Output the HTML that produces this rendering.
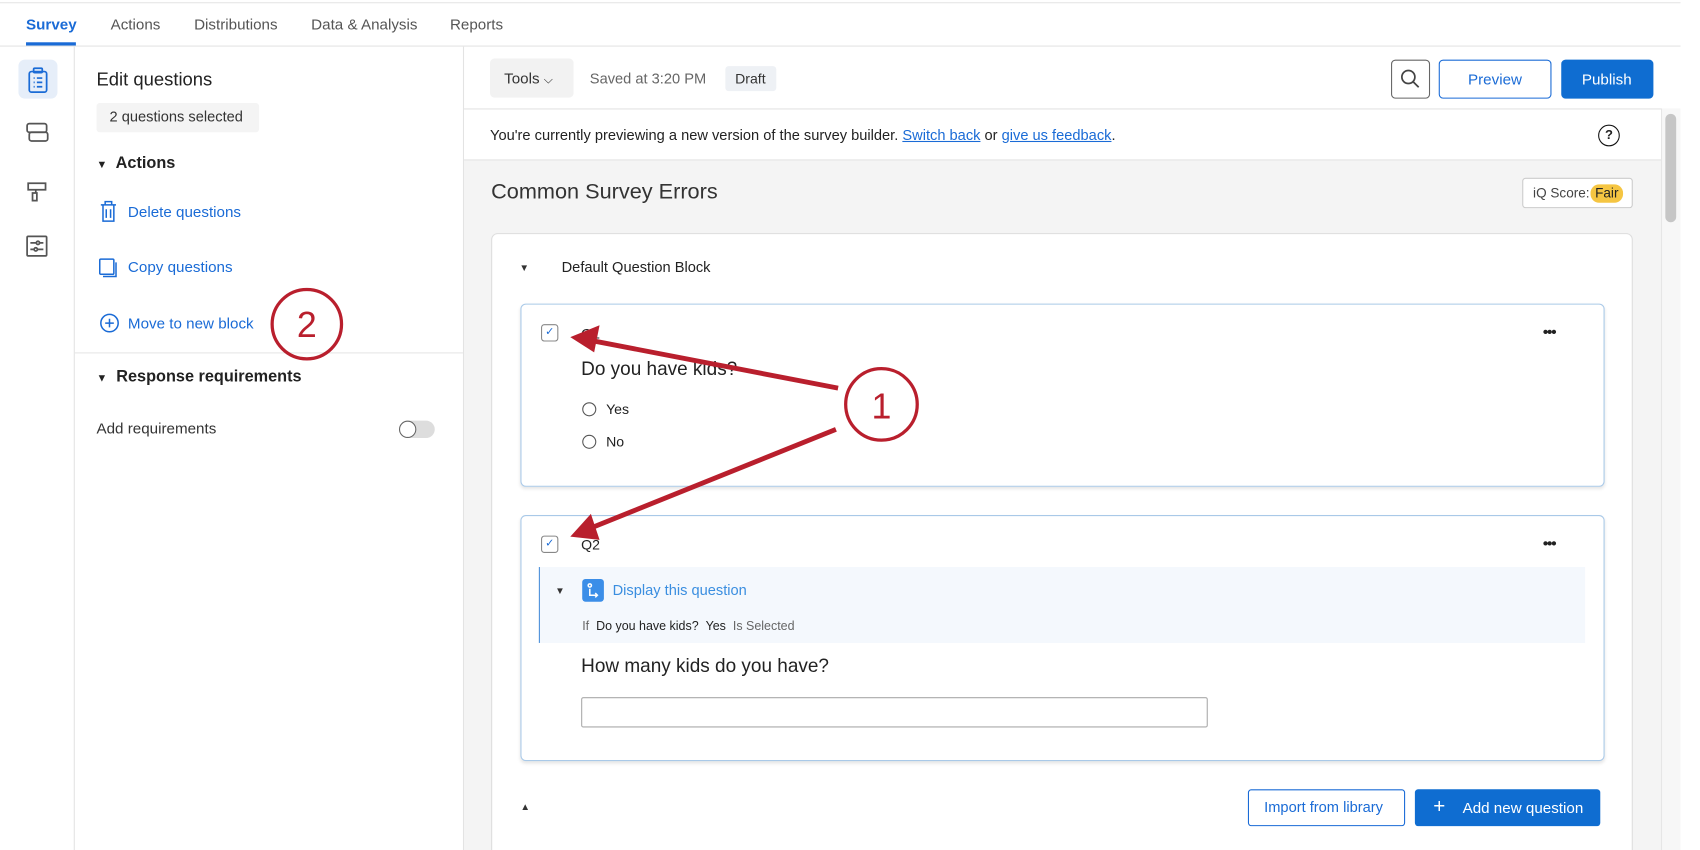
<!DOCTYPE html>
<html><head><meta charset="utf-8"><style>
*{box-sizing:border-box;margin:0;padding:0}
html,body{width:1700px;height:850px;overflow:hidden;background:#fff;font-family:"Liberation Sans",sans-serif;color:#222}
#w{position:absolute;left:0;top:0;width:1550px;height:784px;transform:scale(1.0842);transform-origin:0 0;overflow:hidden;background:#fff}
.a{position:absolute}
.t{position:absolute;white-space:nowrap;line-height:1}
.blue{color:#1a6bd6}
</style></head><body><div id="w">
<div class="a" style="left:0;top:2px;width:1550px;height:1px;background:#e6e6e6"></div>
<div class="a" style="left:0;top:42px;width:1550px;height:1px;background:#e3e3e3"></div>
<div class="t" style="left:24px;top:15px;font-size:14px;font-weight:bold;color:#1a6bd6">Survey</div>
<div class="a" style="left:24px;top:39px;width:46px;height:3px;background:#1a6bd6"></div>
<div class="t" style="left:102px;top:15px;font-size:14px;color:#555">Actions</div>
<div class="t" style="left:179px;top:15px;font-size:14px;color:#555">Distributions</div>
<div class="t" style="left:287px;top:15px;font-size:14px;color:#555">Data &amp; Analysis</div>
<div class="t" style="left:415px;top:15px;font-size:14px;color:#555">Reports</div>
<!-- rail -->
<div class="a" style="left:68px;top:43px;width:1px;height:741px;background:#e3e3e3"></div>
<div class="a" style="left:17px;top:55px;width:36px;height:36px;border-radius:6px;background:#e6eef9"></div>
<svg class="a" style="left:0;top:43px" width="68" height="200" fill="none" stroke-width="1.6">
<g stroke="#1a6bd6"><rect x="27" y="23" width="16" height="19" rx="2"/><rect x="31" y="20" width="8" height="4" rx="1"/><path d="M31 29h1M34 29h5M31 33h1M34 33h5M31 37h1M34 37h5"/></g>
<g stroke="#555"><rect x="25" y="71" width="18" height="8" rx="2"/><rect x="27" y="79" width="17" height="8" rx="2"/><path d="M26 126h16v6H26zM33 132v3h-0M30 135v7h4v-7z"/><rect x="25" y="175" width="18" height="18" rx="1"/><path d="M28 181h5M37 181h3M28 187h3M35 187h5"/><circle cx="35" cy="181" r="1.5"/><circle cx="33" cy="187" r="1.5"/></g>
</svg>
<!-- left panel -->
<div class="a" style="left:427px;top:43px;width:1px;height:741px;background:#e3e3e3"></div>
<div class="t" style="left:89px;top:65px;font-size:17px;color:#222">Edit questions</div>
<div class="a" style="left:89px;top:95px;width:150px;height:27px;background:#f4f4f4;border-radius:3px"></div>
<div class="t" style="left:101px;top:101px;font-size:13.5px;color:#333">2 questions selected</div>
<div class="t" style="left:89px;top:143px;font-size:15px;font-weight:bold"><span style="font-size:10px">▼</span>&nbsp; Actions</div>
<svg class="a" style="left:90px;top:184px" width="24" height="130" fill="none" stroke="#1a6bd6" stroke-width="1.4"><path d="M3 5h14M7 5V2h6v3M5 5v15h10V5M8 9v8M12 9v8"/><rect x="2" y="55" width="13" height="14" rx="1"/><path d="M5 71h12V58"/><circle cx="11" cy="114" r="8"/><path d="M11 110v8M7 114h8"/></svg>
<div class="t blue" style="left:118px;top:188px;font-size:14px">Delete questions</div>
<div class="t blue" style="left:118px;top:239px;font-size:14px">Copy questions</div>
<div class="t blue" style="left:118px;top:291px;font-size:14px">Move to new block</div>
<div class="a" style="left:69px;top:325px;width:358px;height:1px;background:#e6e6e6"></div>
<div class="t" style="left:89px;top:340px;font-size:15px;font-weight:bold"><span style="font-size:10px">▼</span>&nbsp; Response requirements</div>
<div class="t" style="left:89px;top:388px;font-size:14px;color:#333">Add requirements</div>
<div class="a" style="left:368px;top:388px;width:33px;height:16px;border-radius:8px;background:#ddd"></div>
<div class="a" style="left:368px;top:388px;width:16px;height:16px;border-radius:8px;background:#fff;border:1.5px solid #666"></div>
<!-- main -->
<div class="a" style="left:428px;top:100px;width:1104px;height:684px;background:#f4f4f4"></div>
<div class="a" style="left:428px;top:100px;width:1104px;height:1px;background:#e3e3e3"></div>
<div class="a" style="left:428px;top:101px;width:1104px;height:47px;background:#fff;border-bottom:1px solid #e3e3e3"></div>
<div class="a" style="left:452px;top:54px;width:77px;height:36px;background:#f2f2f2;border-radius:4px"></div>
<div class="t" style="left:465px;top:65px;font-size:14px;color:#333">Tools <span style="font-size:11px">⌵</span></div>
<div class="t" style="left:544px;top:66px;font-size:13.5px;color:#666">Saved at 3:20 PM</div>
<div class="a" style="left:669px;top:61px;width:47px;height:23px;background:#eef1f5;border-radius:3px"></div>
<div class="t" style="left:678px;top:66px;font-size:13px;color:#333">Draft</div>
<div class="a" style="left:1283px;top:55px;width:36px;height:36px;border:1.5px solid #666;border-radius:4px"></div>
<svg class="a" style="left:1290px;top:62px" width="22" height="22" fill="none" stroke="#444" stroke-width="1.6"><circle cx="9" cy="9" r="6"/><path d="M13.5 13.5l5 5"/></svg>
<div class="a" style="left:1327px;top:55px;width:104px;height:36px;border:1.5px solid #1a6bd6;border-radius:4px"></div>
<div class="t blue" style="left:1354px;top:66px;font-size:14px">Preview</div>
<div class="a" style="left:1440px;top:55px;width:85px;height:36px;background:#0f6dd1;border-radius:4px"></div>
<div class="t" style="left:1459px;top:66px;font-size:14px;color:#fff">Publish</div>
<div class="t" style="left:452px;top:118px;font-size:13.5px;color:#222">You're currently previewing a new version of the survey builder. <span class="blue" style="text-decoration:underline">Switch back</span> or <span class="blue" style="text-decoration:underline">give us feedback</span>.</div>
<div class="a" style="left:1474px;top:115px;width:20px;height:20px;border:1.6px solid #111;border-radius:50%;font-size:12px;font-weight:bold;text-align:center;line-height:17px">?</div>
<div class="a" style="left:1532px;top:100px;width:18px;height:684px;background:#f7f7f7;border-left:1px solid #e6e6e6"></div>
<div class="a" style="left:1536px;top:105px;width:10px;height:100px;background:#c6c6c6;border-radius:5px"></div>
<div class="t" style="left:453px;top:167px;font-size:20px;color:#333">Common Survey Errors</div>
<div class="a" style="left:1404px;top:164px;width:102px;height:28px;background:#fff;border:1px solid #ccc;border-radius:3px"></div>
<div class="t" style="left:1414px;top:172px;font-size:12.5px;color:#444">iQ Score:</div>
<div class="a" style="left:1467px;top:170px;width:30px;height:17px;background:#f5c542;border-radius:8px;font-size:12.5px;text-align:center;line-height:17px">Fair</div>
<div class="a" style="left:453px;top:215px;width:1053px;height:580px;background:#fff;border:1px solid #ddd;border-radius:6px"></div>
<div class="t" style="left:479px;top:243px;font-size:9px;color:#333">▼</div>
<div class="t" style="left:518px;top:240px;font-size:13.5px;color:#222">Default Question Block</div>
<!-- Q1 -->
<div class="a" style="left:480px;top:280px;width:1000px;height:169px;border:1px solid #a9c9e8;border-radius:5px;box-shadow:0 2px 3px rgba(0,0,0,.1)"></div>
<div class="a" style="left:499px;top:299px;width:16px;height:16px;border:1.3px solid #888;border-radius:3px;color:#1a6bd6;font-size:10px;text-align:center;line-height:14px">✓</div>
<div class="t" style="left:536px;top:301px;font-size:13px;color:#222">Q1</div>
<div class="t" style="left:1423px;top:299px;font-size:14px;font-weight:bold;letter-spacing:-1px">•••</div>
<div class="t" style="left:536px;top:332px;font-size:17.5px;color:#222">Do you have kids?</div>
<div class="a" style="left:537px;top:371px;width:13px;height:13px;border:1.3px solid #555;border-radius:50%"></div>
<div class="t" style="left:559px;top:371px;font-size:13px">Yes</div>
<div class="a" style="left:537px;top:401px;width:13px;height:13px;border:1.3px solid #555;border-radius:50%"></div>
<div class="t" style="left:559px;top:401px;font-size:13px">No</div>
<!-- Q2 -->
<div class="a" style="left:480px;top:475px;width:1000px;height:227px;border:1px solid #a9c9e8;border-radius:5px;box-shadow:0 2px 3px rgba(0,0,0,.1)"></div>
<div class="a" style="left:499px;top:494px;width:16px;height:16px;border:1.3px solid #888;border-radius:3px;color:#1a6bd6;font-size:10px;text-align:center;line-height:14px">✓</div>
<div class="t" style="left:536px;top:496px;font-size:13px;color:#222">Q2</div>
<div class="t" style="left:1423px;top:494px;font-size:14px;font-weight:bold;letter-spacing:-1px">•••</div>
<div class="a" style="left:497px;top:523px;width:965px;height:70px;background:#f4f8fd;border-left:1.5px solid #4a90d9"></div>
<div class="t" style="left:512px;top:541px;font-size:9px;color:#333">▼</div>
<div class="a" style="left:537px;top:534px;width:20px;height:21px;background:#3b8ee8;border-radius:3px"></div>
<svg class="a" style="left:537px;top:534px" width="20" height="21" fill="none" stroke="#fff" stroke-width="1.4"><circle cx="7" cy="6" r="1.5"/><path d="M7 9v6h7M12 13l2 2-2 2"/></svg>
<div class="t" style="left:565px;top:538px;font-size:13.5px;color:#3a8ee0">Display this question</div>
<div class="t" style="left:537px;top:573px;font-size:11.5px;color:#666">If &nbsp;<span style="color:#222">Do you have kids? &nbsp;Yes</span> &nbsp;Is Selected</div>
<div class="t" style="left:536px;top:606px;font-size:17.5px;color:#222">How many kids do you have?</div>
<div class="a" style="left:536px;top:643px;width:578px;height:28px;border:1px solid #aaa;border-radius:2px"></div>
<div class="t" style="left:480px;top:740px;font-size:9px;color:#333">▲</div>
<div class="a" style="left:1151px;top:728px;width:145px;height:34px;border:1.5px solid #1a6bd6;border-radius:3px"></div>
<div class="t blue" style="left:1166px;top:738px;font-size:13.5px">Import from library</div>
<div class="a" style="left:1305px;top:728px;width:171px;height:34px;background:#0f6dd1;border-radius:3px"></div>
<div class="t" style="left:1322px;top:735px;font-size:19px;color:#fff;font-weight:300">+</div>
<div class="t" style="left:1349px;top:738px;font-size:14px;color:#fff">Add new question</div>
<!-- annotations -->
<svg class="a" style="left:0;top:0" width="1550" height="784">
<g stroke="#b91f2d" fill="none" stroke-width="3"><circle cx="283" cy="299" r="32"/><circle cx="813" cy="373" r="33"/>
<path d="M773 358L545 314" stroke-width="4.5"/><path d="M771 396L545 487" stroke-width="4.5"/></g>
<g fill="#b91f2d"><path d="M526 311L553 300L548 325Z"/><path d="M526 495L545 474L553 498Z"/></g>
<text x="283" y="311" font-size="33" fill="#b91f2d" text-anchor="middle" font-family="Liberation Sans">2</text>
<text x="813" y="386" font-size="33" fill="#b91f2d" text-anchor="middle" font-family="Liberation Sans">1</text>
</svg>
</div></body></html>
